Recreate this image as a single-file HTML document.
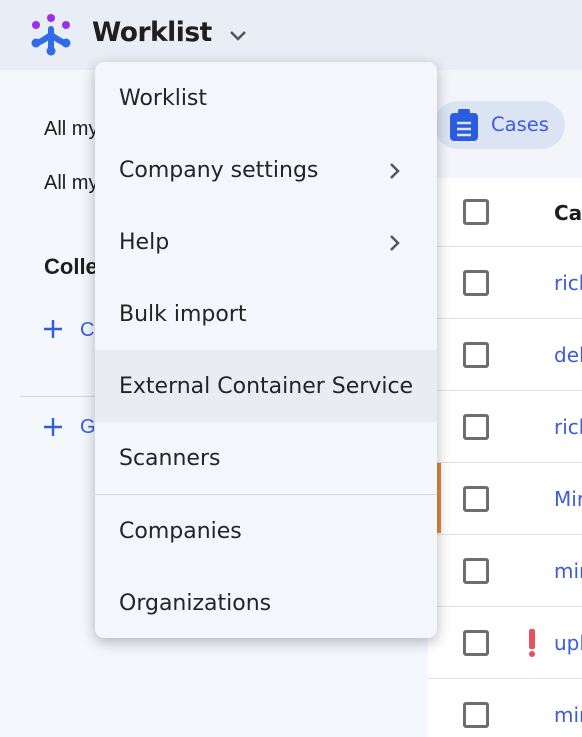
<!DOCTYPE html>
<html><head><style>
*{margin:0;padding:0;box-sizing:border-box}
body{width:582px;height:737px;overflow:hidden;position:relative;background:#f4f7fc;font-family:"Liberation Sans",sans-serif}
.hdr{position:absolute;left:0;top:0;width:582px;height:70px;background:#e9edf5}
.title{position:absolute;left:92px;top:17px;font-family:"DejaVu Sans",sans-serif;font-size:26.5px;font-weight:bold;color:#1f1f1f;letter-spacing:-0.5px}
.left{position:absolute;left:0;top:70px;width:428px;height:667px;background:#f4f7fc}
.lt{position:absolute;font-size:20px;color:#1d1d1d}
.right{position:absolute;left:428px;top:70px;width:154px;height:667px;background:#f2f5fa}
.table{position:absolute;left:428px;top:178px;width:154px;height:559px;background:#fff}
.row{position:absolute;left:428px;width:154px;border-top:1.5px solid #e0e0e0}
.cb{position:absolute;left:463px;width:26px;height:26px;border:3px solid #6e6e6e;border-radius:3px}
.lnk{position:absolute;left:554px;font-size:20px;color:#3b5ce0;font-family:"DejaVu Sans",sans-serif}
.menu{position:absolute;left:95px;top:62px;width:342px;height:576px;background:#f3f6fb;border-radius:9px;box-shadow:0 4px 14px rgba(0,0,0,.28);overflow:hidden}
.mi{position:absolute;left:0;width:342px;height:72px;font-family:"DejaVu Sans",sans-serif;font-size:22px;color:#242424;padding-left:24px;line-height:74px}
.chev{position:absolute;right:36px;top:28px}
.plus{position:absolute;left:43px}
</style></head><body>
<div class="hdr"></div>
<svg style="position:absolute;left:30px;top:13px" width="42" height="44" viewBox="0 0 42 44">
<circle cx="21" cy="5" r="4" fill="#9b2ff0"/><circle cx="6" cy="12" r="4" fill="#9b2ff0"/><circle cx="36" cy="12" r="4" fill="#9b2ff0"/>
<path d="M21 16 L21 37 M6 31 Q14 27 21 22 Q28 27 36 31" stroke="#2f6be6" stroke-width="6" fill="none" stroke-linecap="round"/>
<circle cx="21" cy="38" r="4.5" fill="#2f6be6"/><circle cx="6" cy="30" r="4.5" fill="#2f6be6"/><circle cx="36" cy="30" r="4.5" fill="#2f6be6"/>
</svg>
<div class="title">Worklist</div>
<svg style="position:absolute;left:229px;top:30px" width="18" height="12"><path d="M2 2 L9 9 L16 2" stroke="#555" stroke-width="2.5" fill="none"/></svg>
<div class="left"></div>
<div class="lt" style="left:44px;top:118px">All my</div>
<div class="lt" style="left:44px;top:172px">All my</div>
<div class="lt" style="left:44px;top:254px;font-weight:bold;font-size:22px">Colle</div>
<svg class="plus" style="top:319px" width="20" height="20"><path d="M10 1V19M1 10H19" stroke="#2f5fe0" stroke-width="2.4"/></svg>
<div class="lt" style="left:80px;top:319px;color:#3b5ce0">C</div>
<div style="position:absolute;left:20px;top:396px;width:408px;border-top:1.5px solid #d5d8dd"></div>
<svg class="plus" style="top:417px" width="20" height="20"><path d="M10 1V19M1 10H19" stroke="#2f5fe0" stroke-width="2.4"/></svg>
<div class="lt" style="left:80px;top:416px;color:#3b5ce0">G</div>
<div class="right"></div>
<div style="position:absolute;left:434px;top:101px;width:131px;height:48px;border-radius:24px;background:#dce4f3"></div>
<svg style="position:absolute;left:450px;top:109px" width="28" height="32" viewBox="0 0 28 32"><rect x="0" y="4" width="28" height="28" rx="4" fill="#2b5ce0"/><rect x="8" y="0" width="12" height="8" rx="2" fill="#2b5ce0"/><path d="M7 14h14M7 20h14M7 26h14" stroke="#dce4f3" stroke-width="2.5"/></svg>
<div class="lnk" style="left:491px;top:113px;color:#3b5ce0;font-size:19.5px">Cases</div>
<div class="table"></div>
<div class="row" style="top:246px"></div><div class="row" style="top:318px"></div><div class="row" style="top:390px"></div><div class="row" style="top:462px"></div><div class="row" style="top:534px"></div><div class="row" style="top:606px"></div><div class="row" style="top:678px"></div>
<div style="position:absolute;left:428px;top:463px;width:13px;height:70px;background:#e0893a"></div>
<div class="cb" style="top:199px"></div><div class="cb" style="top:270px"></div><div class="cb" style="top:342px"></div><div class="cb" style="top:414px"></div><div class="cb" style="top:486px"></div><div class="cb" style="top:558px"></div><div class="cb" style="top:630px"></div><div class="cb" style="top:702px"></div>
<div class="lnk" style="top:201px;color:#1d1d1d;font-weight:bold">Cas</div>
<div class="lnk" style="top:271px">rick</div><div class="lnk" style="top:343px">del</div><div class="lnk" style="top:415px">rick</div><div class="lnk" style="top:487px">Mir</div><div class="lnk" style="top:559px">mir</div><div class="lnk" style="top:631px">upl</div><div class="lnk" style="top:703px">mir</div>
<div style="position:absolute;left:529px;top:629px;width:6px;height:20px;background:#e8505f;border-radius:2px"></div>
<div style="position:absolute;left:529px;top:651px;width:6px;height:6px;background:#e8505f;border-radius:3px"></div>
<div class="menu">
<div class="mi" style="top:0">Worklist</div>
<div class="mi" style="top:72px">Company settings<svg class="chev" width="12" height="18"><path d="M2 2 L9 9 L2 16" stroke="#555" stroke-width="2.5" fill="none"/></svg></div>
<div class="mi" style="top:144px">Help<svg class="chev" width="12" height="18"><path d="M2 2 L9 9 L2 16" stroke="#555" stroke-width="2.5" fill="none"/></svg></div>
<div class="mi" style="top:216px">Bulk import</div>
<div class="mi" style="top:288px;background:#e9ecf1">External Container Service</div>
<div class="mi" style="top:360px">Scanners</div>
<div style="position:absolute;left:0;top:432px;width:342px;border-top:1.5px solid #d6d9de"></div>
<div class="mi" style="top:433px">Companies</div>
<div class="mi" style="top:505px">Organizations</div>
</div>
</body></html>
